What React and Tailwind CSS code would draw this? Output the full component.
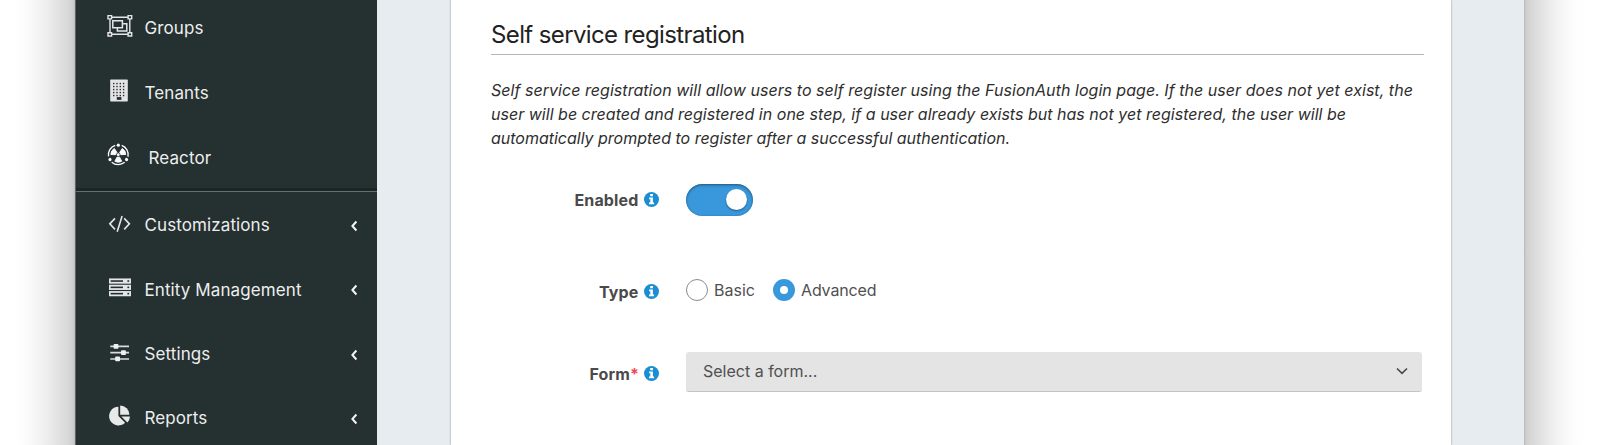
import React from "react";

const GroupsIcon = () => (
  <svg width="28" height="28" viewBox="105 14.25 28 28" fill="none" stroke="#e4e6e6">
    <path d="M111.5 17.5H128.3M111.5 34.5H128.3M110 19V33M129.8 19V33" strokeWidth="1.4" />
    <path d="M108 15.9h3.6v3.2H108zM128.1 15.9h3.6v3.2h-3.6zM108 33h3.6v3.2H108zM128.1 33h3.6v3.2h-3.6z" strokeWidth="1.4" />
    <path d="M112.8 20.9h9.6v7.2h-9.6zM123.2 23.9h3.6v7.4h-9.4v-2.6" strokeWidth="1.5" />
  </svg>
);

const windows = [111, 114.3, 117.6, 120.9].flatMap((x) =>
  [82.6, 85.6, 88.6, 91.6, 94.6].map((y) => [x + 2, y])
);

const TenantsIcon = () => (
  <svg width="28" height="28" viewBox="105 78.75 28 28">
    <rect x="110.2" y="79.2" width="17.6" height="22" rx="0.7" fill="#e4e4e6" />
    <g fill="#253030">
      {windows.map(([x, y]) => (
        <rect key={x + "-" + y} x={x} y={y} width="1.4" height="1.4" />
      ))}
      <rect x="116.8" y="96.8" width="4.6" height="2.8" />
    </g>
  </svg>
);

const ReactorIcon = () => (
  <svg width="28" height="28" viewBox="105 143.25 28 28">
    <g transform="translate(118.3 155)">
      {[0, 120, 240].map((a) => (
        <g key={a} transform={"rotate(" + a + ")"}>
          <path d="M3.4 -9.3A9.9 9.9 0 0 1 9.7 2" fill="none" stroke="#fff" strokeWidth="1.3" />
          <circle cx="0" cy="-9.6" r="1.6" fill="#fff" />
          <path d="M-1.2 2.2L-3.5 6.6Q0 8.6 3.5 6.6L1.2 2.2Q0 2.8 -1.2 2.2Z" fill="#fff" stroke="#fff" strokeWidth="0.8" />
        </g>
      ))}
      <circle r="1.4" fill="#fff" />
    </g>
  </svg>
);

const CodeIcon = () => (
  <svg width="28" height="28" viewBox="105 210.25 28 28" fill="none" stroke="#e4e6e6" strokeWidth="1.6">
    <path d="M115 218.6L109.8 224.1L115 229.6M124.2 218.6L129.4 224.1L124.2 229.6M122.1 216.2L117.2 232" />
  </svg>
);

const EntityIcon = () => (
  <svg width="28" height="28" viewBox="105 274.75 28 28">
    {[278.2, 284.5, 290.8].map((y) => (
      <g key={y}>
        <rect x="109" y={y} width="22" height="5.2" fill="#e4e6e6" />
        <rect x="110.6" y={y + 1.8} width="12.4" height="1.6" fill="#253030" />
        <rect x="127.4" y={y + 1.8} width="1.8" height="1.6" fill="#253030" />
      </g>
    ))}
  </svg>
);

const SettingsIcon = () => (
  <svg width="28" height="28" viewBox="105 339.25 28 28">
    <path d="M110.3 346.6H129M110.3 352.9H129M110.3 359.2H129" stroke="#d9dcdc" strokeWidth="1.6" />
    <g fill="#f0f0f0">
      <rect x="113.6" y="344.2" width="4.8" height="4.8" rx="0.8" />
      <rect x="121.1" y="350.5" width="4.8" height="4.8" rx="0.8" />
      <rect x="115.2" y="356.8" width="4.8" height="4.8" rx="0.8" />
    </g>
  </svg>
);

const ReportsIcon = () => (
  <svg width="28" height="28" viewBox="105 404.5 28 28" fill="#e8e9e9">
    <path d="M118.4 407.2V416.6L125.1 423.3A9.4 9.4 0 1 1 118.4 407.2Z" />
    <path d="M120.2 406A9.2 9.2 0 0 1 129.4 415.2H120.2Z" />
    <path d="M121.4 417H130A9.2 9.2 0 0 1 127.4 423Z" />
  </svg>
);

const NavItem = ({ icon, label, chevron, wide, shift = "pt-0" }) => (
  <div className="flex h-[64.5px] items-center pl-[29px] pr-[19px]">
    <span className="w-7 shrink-0">{icon}</span>
    <span
      className={
        (wide ? "ml-[15.5px] " : "ml-[11.5px] ") +
        shift +
        " flex-1 whitespace-nowrap text-[17px] leading-6 tracking-[0.1px] text-[#eceeee]"
      }
    >
      {label}
    </span>
    {chevron && (
      <svg className="mt-[3px]" width="8" height="12" viewBox="0 0 8 12" fill="none" stroke="#f4f5f5" strokeWidth="2">
        <path d="M6.4 1.5L2.4 6L6.4 10.5" />
      </svg>
    )}
  </div>
);

const Info = () => (
  <svg className="ml-[5.5px] shrink-0" width="15" height="15" viewBox="0 0 15 15">
    <circle cx="7.5" cy="7.5" r="7.5" fill="#1b8dd2" />
    <path d="M6.2 2.1h2.7v2.1H6.2zM5.1 5.5h3.8v5h1.2v1.8H5v-1.8h1.3V7.2H5.1z" fill="#fff" />
  </svg>
);

const Label = ({ children }) => (
  <div className="flex w-[168px] shrink-0 items-center justify-end text-[16px] font-bold leading-6 tracking-[0.15px] text-[#4a4a4a]">
    <span>{children}</span>
    <Info />
  </div>
);

export default function App() {
  return (
    <div className="flex h-[445px] w-[1600px] overflow-hidden bg-white font-['Inter',sans-serif]">
      <div className="w-[75px] shrink-0 bg-[linear-gradient(to_right,#fff_0,#fefefe_20px,#f8f8f8_32px,#eeeeee_46px,#e2e2e2_58px,#d8d8d8_68px,#cecece_73px,#bbbdbd_75px)]" />
      <nav className="w-[302px] shrink-0 border-l border-[#5d6565] bg-[#253030]">
        <div className="flex h-[192px] flex-col justify-between">
          <div className="-mt-[4px]">
            <NavItem icon={<GroupsIcon />} label="Groups" />
            <NavItem icon={<TenantsIcon />} label="Tenants" />
            <NavItem icon={<ReactorIcon />} label="Reactor" wide shift="pt-[2px]" />
          </div>
          <div className="-mt-[3px] mb-[0.5px] h-[4px] shrink-0 border-b border-[#666e6e] bg-[#1c2526]" />
        </div>
        <NavItem icon={<CodeIcon />} label="Customizations" chevron shift="pt-[2px]" />
        <NavItem icon={<EntityIcon />} label="Entity Management" chevron shift="pt-[2px]" />
        <NavItem icon={<SettingsIcon />} label="Settings" chevron shift="pt-[2px]" />
        <NavItem icon={<ReportsIcon />} label="Reports" chevron shift="pt-[1px]" />
      </nav>
      <main className="flex w-[1147px] shrink-0 justify-start bg-[#e7ecf0] pl-[74px]">
        <section className="h-[445px] w-[1000px] bg-white pl-[40px] pr-[27px] shadow-[0_0_2px_rgba(0,0,0,0.4)]">
          <h2 className="h-[55px] border-b border-[#b5b5b5] pt-[19px] text-[24px] font-normal leading-8 tracking-[-0.62px] text-[#222]">
            Self service registration
          </h2>
          <p className="mt-[23px] whitespace-nowrap text-[16px] italic leading-[24.2px] text-[#2e2e2e]">
            <span className="tracking-[0.043px]">
              Self service registration will allow users to self register using the FusionAuth login page. If the user does not yet exist, the
            </span>
            <br />
            <span className="tracking-[0.018px]">
              user will be created and registered in one step, if a user already exists but has not yet registered, the user will be
            </span>
            <br />
            <span className="tracking-[-0.014px]">automatically prompted to register after a successful authentication.</span>
          </p>
          <div className="mt-[33px] flex h-8 items-center">
            <Label>Enabled</Label>
            <div className="ml-[27px] flex h-8 w-[67px] items-center justify-end rounded-full bg-[#3998db] pr-[6px] shadow-[inset_0_1px_3px_rgba(0,0,0,0.45)]">
              <div className="size-[21px] rounded-full bg-white shadow-[0_1px_2px_rgba(0,0,0,0.4)]" />
            </div>
          </div>
          <div className="mt-[62px] flex h-6 items-center text-[16px] text-[#505050]">
            <div className="mt-[4px]">
              <Label>Type</Label>
            </div>
            <span className="ml-[27px] size-[22px] rounded-full border border-[#8c8c8c]" />
            <span className="ml-[6px] w-[59px]">Basic</span>
            <span className="flex size-[22px] items-center justify-center rounded-full bg-[#3998db]">
              <span className="size-[8px] rounded-full bg-white" />
            </span>
            <span className="ml-[6px] tracking-[-0.15px]">Advanced</span>
          </div>
          <div className="mt-[50px] flex h-10 items-center">
            <div className="mt-[4px]">
              <Label>
                Form<span className="tracking-[-0.5px] text-[#f5455c]">*</span>
              </Label>
            </div>
            <div className="ml-[27px] flex h-10 w-[736px] shrink-0 items-center justify-between rounded-[3px] border-b border-[#c4c4c4] bg-[#e4e4e4] pl-[17px] pr-[14px] text-[16px] text-[#505050]">
              <span>Select a form...</span>
              <svg width="12" height="8" viewBox="0 0 12 8" fill="none" stroke="#4a4a4a" strokeWidth="1.7">
                <path d="M1 1.5L6 6.3L11 1.5" />
              </svg>
            </div>
          </div>
        </section>
      </main>
      <div className="w-[76px] shrink-0 bg-[linear-gradient(to_right,#b8b8b8_0,#cfcfcf_2px,#d6d6d6_6px,#e1e1e1_16px,#eeeeee_28px,#f9f9f9_42px,#fefefe_54px,#fff_75px)]" />
    </div>
  );
}
